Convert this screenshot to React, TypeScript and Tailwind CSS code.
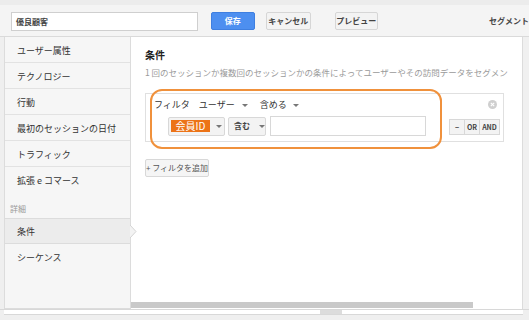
const font = { fontFamily: '"Noto Sans CJK JP", "Liberation Sans", sans-serif' }

const sideItems = ["ユーザー属性", "テクノロジー", "行動", "最初のセッションの日付", "トラフィック"]

const Caret = () => <span className="inline-block w-0 h-0 border-x-[3px] border-x-transparent border-t-[3px] border-t-[#777]" />

const GrayButton = ({ children, className = "" }: { children: React.ReactNode; className?: string }) => (
    <div className={`flex items-center justify-center whitespace-nowrap border border-[#d6d6d6] bg-[#f3f3f3] rounded-[2px] text-[8px] font-bold text-[#444] ${className}`}>
        {children}
    </div>
)

const App = () => {
    return (
        <div className="relative w-[529px] h-[320px] overflow-hidden bg-[#efefef] text-[#333]" style={font}>
            {/* header */}
            <div className="h-[37px] border-b border-[#dadada] bg-[#f4f4f4] border-t-[5px] border-t-[#ececec] flex items-start pt-[7px]">
                <div className="ml-[11px] w-[189px] h-[19px] bg-white border border-[#cfcfcf] flex items-center pl-[4px] text-[8px] font-bold text-[#444]">
                    優良顧客
                </div>
                <div className="ml-[13px] w-[45px] h-[18px] bg-[#4d8ff0] border border-[#3f7fe0] rounded-[2px] flex items-center justify-center text-[8px] font-bold text-white">
                    保存
                </div>
                <GrayButton className="ml-[11px] w-[45px] h-[18px]">キャンセル</GrayButton>
                <GrayButton className="ml-[24px] w-[44px] h-[18px]">プレビュー</GrayButton>
                <div className="ml-[111px] h-[18px] flex items-center whitespace-nowrap text-[8px] font-bold text-[#444]">セグメント</div>
            </div>

            {/* body */}
            <div className="flex h-[273px] pl-[4px] border-b border-[#d8d8d8]">
                <div className="relative w-[127px] bg-[#f6f6f6] border-x border-b border-[#dcdcdc] flex flex-col">
                    {sideItems.map(item => (
                        <div key={item} className="h-[26px] border-b border-[#e2e2e2] flex items-center pl-[12px] pt-[2px] text-[9px]">{item}</div>
                    ))}
                    <div className="h-[25px] flex items-center pl-[12px] pt-[2px] text-[9px]">拡張 e コマース</div>
                    <div className="h-[26px] flex items-end pb-[3px] pl-[5px] text-[8px] text-[#999]">詳細</div>
                    <div className="h-[26px] bg-[#ececec] border-y border-[#dcdcdc] flex items-center pl-[12px] pt-[1px] text-[9px]">条件</div>
                    <div className="h-[26px] flex items-center pl-[12px] pt-[1px] text-[9px]">シーケンス</div>
                    <svg className="absolute right-[-7px] top-[188px]" width="7" height="13" viewBox="0 0 7 13">
                        <path d="M0 0 L6 6.5 L0 13" fill="#f3f3f3" stroke="#d4d4d4" strokeWidth="1" />
                    </svg>
                </div>

                <div className="w-[392px] bg-white border-r border-[#dcdcdc] flex flex-col">
                    <div className="flex-1 pl-[14px] pt-[10px] overflow-hidden">
                        <div className="text-[10px] font-bold leading-[16px] text-[#222]">条件</div>
                        <div className="text-[8.5px] leading-[18px] text-[#9a9a9a] whitespace-nowrap">1 回のセッションか複数回のセッションかの条件によってユーザーやその訪問データをセグメン</div>

                        <div className="mt-[12px] w-[359px] h-[49px] border border-[#e0e0e0] relative">
                            <div className="flex items-center h-[22px] pl-[8px] text-[9px] text-[#333]">
                                <span>フィルタ</span>
                                <span className="ml-[9px]">ユーザー</span>
                                <span className="ml-[7px] flex"><Caret /></span>
                                <span className="ml-[12px]">含める</span>
                                <span className="ml-[6px] flex"><Caret /></span>
                            </div>
                            <div className="absolute right-[6px] top-[6px] w-[9px] h-[9px] rounded-full bg-[#cfcfcf] flex items-center justify-center">
                                <svg width="5" height="5" viewBox="0 0 5 5"><path d="M0.8 0.8 L4.2 4.2 M4.2 0.8 L0.8 4.2" stroke="white" strokeWidth="1.1" /></svg>
                            </div>
                            <div className="flex items-center pl-[22px]">
                                <div className="w-[57px] h-[19px] border border-[#d8d8d8] bg-[#f3f3f3] rounded-[2px] flex items-center pl-[2px]">
                                    <span className="bg-[#ec7317] text-white text-[10px] leading-[12px] h-[12px] w-[39px] flex items-center justify-center whitespace-nowrap">会員ID</span>
                                    <span className="ml-[6px] flex"><Caret /></span>
                                </div>
                                <div className="ml-[3px] w-[38px] h-[19px] border border-[#d8d8d8] bg-[#f3f3f3] rounded-[2px] flex items-center pl-[5px] text-[8px] font-bold text-[#444] whitespace-nowrap">
                                    含む
                                    <span className="ml-[9px] flex"><Caret /></span>
                                </div>
                                <div className="ml-[4px] w-[156px] h-[20px] border border-[#d8d8d8] bg-white" />
                                <div className="ml-[23px] mt-[2px] flex h-[16px] border border-[#d8d8d8] bg-[#f3f3f3] text-[7px] font-bold text-[#444]">
                                    <div className="w-[15px] flex items-center justify-center border-r border-[#d8d8d8]">−</div>
                                    <div className="w-[15px] flex items-center justify-center border-r border-[#d8d8d8]">OR</div>
                                    <div className="w-[19px] flex items-center justify-center">AND</div>
                                </div>
                            </div>
                        </div>

                        <div className="mt-[17px] w-[64px] h-[18px] border border-[#d8d8d8] bg-[#f5f5f5] rounded-[2px] flex items-center justify-center text-[8px] text-[#555] whitespace-nowrap">
                            + フィルタを追加
                        </div>
                    </div>
                    <div className="h-[6px] w-[342px] bg-[#c9c9c9] mb-[1px]" />
                </div>
                <div className="flex-1 bg-[#f0f0f0]" />
            </div>

            {/* outer scroll strip */}
            <div className="h-[5px] ml-[4px] w-[519px] bg-white border-b border-[#d8d8d8] flex">
                <div className="ml-[316px] w-[22px] h-full bg-[#dcdcdc]" />
            </div>

            {/* highlight annotation */}
            <div className="absolute left-[150px] top-[89px] w-[292px] h-[60px] border-2 border-[#f0913c] rounded-[12px] pointer-events-none" />
        </div>
    )
}

export default App
